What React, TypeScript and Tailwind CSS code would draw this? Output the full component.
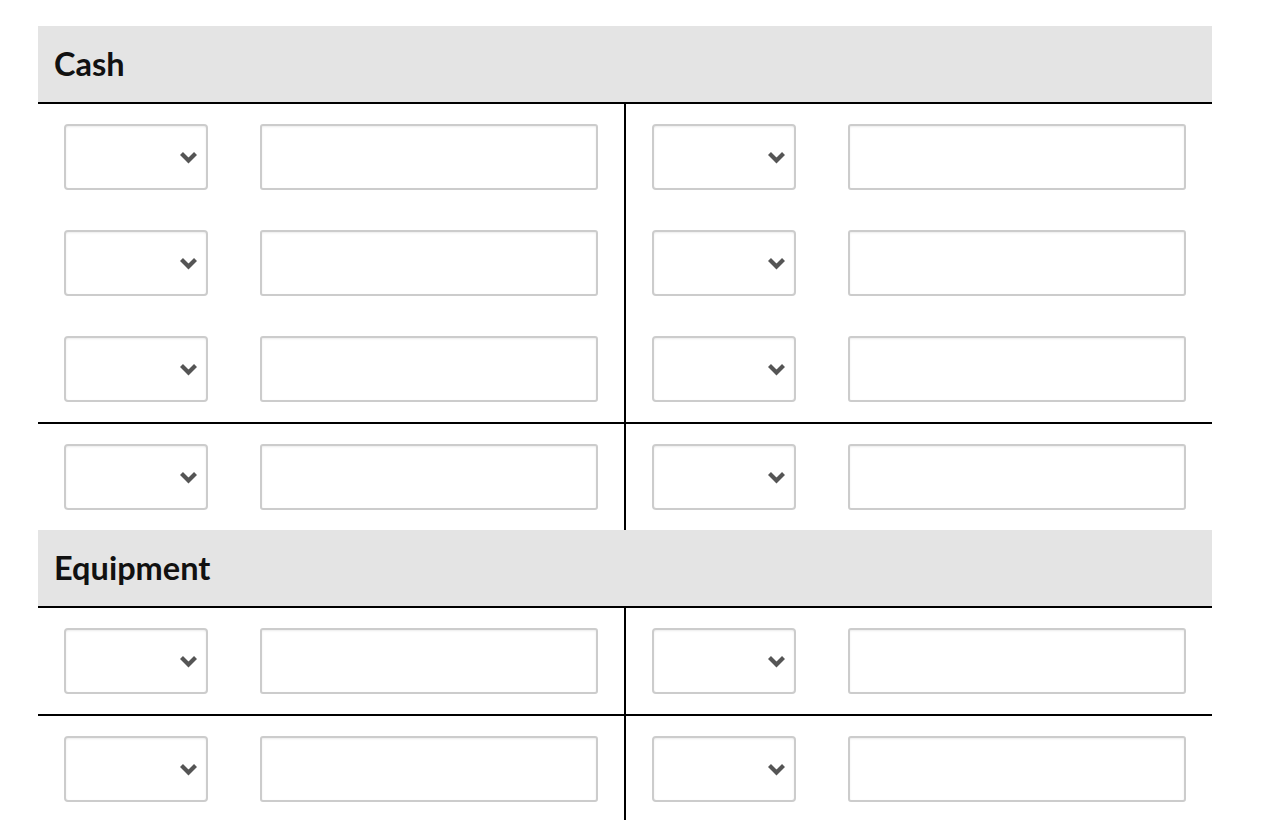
import React from "react";

function Chevron() {
  return (
    <svg width="19" height="13" viewBox="0 0 19 13" aria-hidden="true">
      <polyline points="2.5,2.5 9.5,9.5 16.5,2.5" fill="none" stroke="#555555" strokeWidth="4.2" strokeLinejoin="miter" />
    </svg>
  );
}

function Entry() {
  return (
    <div className="flex items-center gap-[52px] px-[26px] py-[20px]">
      <div className="flex h-[66px] w-[144px] items-center justify-end rounded-[4px] border-2 border-[#cccccc] bg-white pr-[8px] shadow-[inset_0_1px_2px_rgba(0,0,0,0.08)]">
        <Chevron />
      </div>
      <div className="h-[66px] w-[338px] rounded-[3px] border-2 border-[#cccccc] bg-white shadow-[inset_0_1px_2px_rgba(0,0,0,0.08)]" />
    </div>
  );
}

function Side({ rows }: { rows: number }) {
  return (
    <div className="w-[586px]">
      {Array.from({ length: rows }).map((_, i) => (
        <Entry key={i} />
      ))}
    </div>
  );
}

function Account({ title, rows }: { title: string; rows: number }) {
  return (
    <section>
      <div className="flex h-[78px] items-center border-b-2 border-black bg-[#e4e4e4] px-[16px]">
        <h2 className="text-[32.5px] font-bold leading-none text-[#111]">{title}</h2>
      </div>
      <div className="flex">
        <Side rows={rows} />
        <div className="w-[2px] bg-black" />
        <Side rows={rows} />
      </div>
      <div className="h-[2px] bg-black" />
      <div className="flex">
        <Side rows={1} />
        <div className="w-[2px] bg-black" />
        <Side rows={1} />
      </div>
    </section>
  );
}

export default function App() {
  return (
    <div className="h-[820px] overflow-hidden bg-white pt-[26px] font-['Lato','Liberation_Sans',sans-serif]">
      <div className="ml-[38px] w-[1174px]">
        <Account title="Cash" rows={3} />
        <Account title="Equipment" rows={1} />
      </div>
    </div>
  );
}
